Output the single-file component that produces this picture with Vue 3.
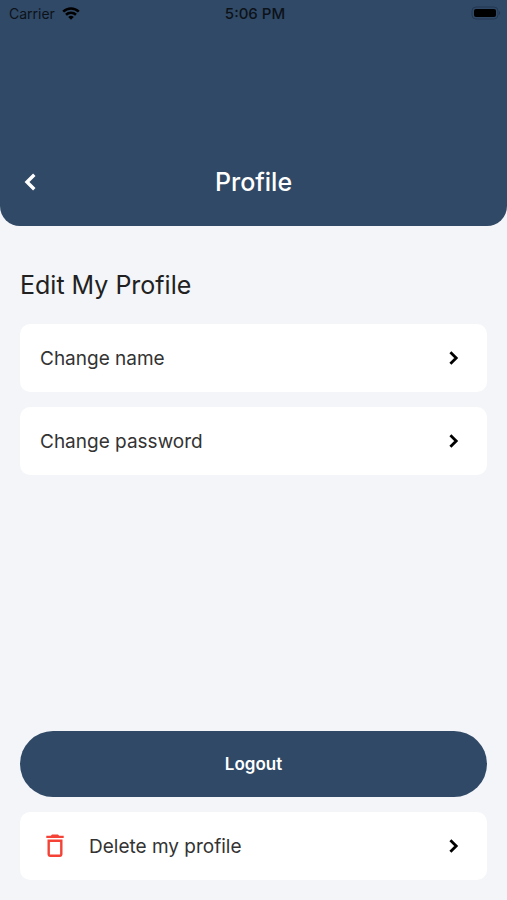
<script setup>
  import { ref } from 'vue'

  const time = ref('5:06 PM')

  const profileOptions = [
    { id: 'name', label: 'Change name' },
    { id: 'password', label: 'Change password' }
  ]
</script>

<template>
  <div class="profilePage">
    <header class="profileHeader">
      <div class="statusBar">
        <div class="statusCarrier">
          <span>Carrier</span>
          <svg class="wifiIcon" viewBox="0 0 18 13" aria-hidden="true">
            <path d="M1.2 4.6a11.2 11.2 0 0 1 15.6 0" />
            <path d="M4 7.8a7.2 7.2 0 0 1 10 0" />
            <path class="wifiDot" d="M9 12.8L6.2 10a4 4 0 0 1 5.6 0z" />
          </svg>
        </div>
        <span class="statusTime">{{ time }}</span>
        <svg class="batteryIcon" viewBox="0 0 30 14" aria-hidden="true">
          <rect class="batteryOutline" x="1" y="1" width="26" height="12" rx="4" />
          <rect x="3" y="3" width="22" height="8" rx="2" />
          <path class="batteryCap" d="M28 5a2.4 2.4 0 0 1 0 4z" />
        </svg>
      </div>
      <div class="titleBar">
        <button type="button" class="backButton" aria-label="Back">
          <svg viewBox="0 0 12 18" aria-hidden="true">
            <path d="M10.3 1.7L3 9l7.3 7.3" />
          </svg>
        </button>
        <h1 class="pageTitle">Profile</h1>
      </div>
    </header>

    <main class="profileContent">
      <h2 class="sectionTitle">Edit My Profile</h2>
      <button v-for="option in profileOptions" :key="option.id" type="button" class="optionCard">
        <span>{{ option.label }}</span>
        <svg class="chevronIcon" viewBox="0 0 10 14" aria-hidden="true">
          <path d="M1.4 1.2L7.2 7l-5.8 5.8" />
        </svg>
      </button>

      <div class="profileActions">
        <button type="button" class="logoutButton">Logout</button>
        <button type="button" class="optionCard">
          <svg class="trashIcon" viewBox="0 0 18 24" aria-hidden="true">
            <path d="M.3 1.7h4.5L6 .6h6l1.2 1.1h4.5v2.2H.3z" />
            <path fill-rule="evenodd" d="M1.5 5.6h15v14.9a2.4 2.4 0 0 1-2.4 2.4H3.9a2.4 2.4 0 0 1-2.4-2.4zM3.9 7.9v12.6h10.2V7.9z" />
          </svg>
          <span>Delete my profile</span>
          <svg class="chevronIcon" viewBox="0 0 10 14" aria-hidden="true">
            <path d="M1.4 1.2L7.2 7l-5.8 5.8" />
          </svg>
        </button>
      </div>
    </main>
  </div>
</template>

<style>
  body {
    margin: 0;
    background-color: #f3f5f9;
  }
</style>

<style scoped>
  .profilePage {
    display: flex;
    flex-direction: column;
    min-height: 100vh;
    background-color: #f3f5f9;
    color: #212121;
    font-family: Inter, "Liberation Sans", sans-serif;
  }

  .profileHeader {
    padding-bottom: 20px;
    border-radius: 0 0 20px 20px;
    background-color: #304966;
  }

  .statusBar {
    display: grid;
    grid-template-columns: 1fr auto 1fr;
    align-items: center;
    height: 26px;
    padding: 0 6px 0 9px;
    color: #0c1219;
    font-size: 14px;
  }

  .statusCarrier {
    display: flex;
    align-items: center;
    gap: 7px;
  }

  .statusTime {
    font-size: 15px;
    font-weight: 500;
  }

  .wifiIcon {
    width: 18px;
    height: 13px;
    fill: none;
    stroke: #000;
    stroke-width: 2.6;
  }

  .wifiDot {
    fill: #000;
    stroke: none;
  }

  .batteryIcon {
    width: 30px;
    height: 14px;
    justify-self: end;
  }

  .batteryOutline {
    fill: none;
    stroke: #233750;
  }

  .batteryCap {
    fill: #233750;
  }

  .titleBar {
    display: grid;
    grid-template-columns: 48px 1fr 48px;
    align-items: center;
    height: 48px;
    margin-top: 132px;
    padding: 0 6px;
  }

  .backButton {
    display: flex;
    align-items: center;
    justify-content: center;
    height: 48px;
    padding: 0;
    border: none;
    background: none;
    cursor: pointer;
  }

  .backButton svg {
    width: 12px;
    height: 18px;
    fill: none;
    stroke: #fff;
    stroke-width: 3.4;
  }

  .pageTitle {
    margin: 0;
    color: #fff;
    font-size: 25px;
    font-weight: 500;
    text-align: center;
  }

  .profileContent {
    display: flex;
    flex: 1;
    flex-direction: column;
    gap: 15px;
    padding: 43px 20px 20px;
  }

  .sectionTitle {
    margin: 0 0 8px;
    font-size: 25px;
    font-weight: 400;
    line-height: 32px;
  }

  .optionCard {
    display: flex;
    align-items: center;
    width: 100%;
    height: 68px;
    padding: 0 28px 0 20px;
    border: none;
    border-radius: 10px;
    background-color: #fff;
    color: #333;
    font-family: inherit;
    font-size: 19px;
    text-align: left;
    cursor: pointer;
  }

  .chevronIcon {
    width: 10px;
    height: 14px;
    margin-left: auto;
    fill: none;
    stroke: #000;
    stroke-width: 2.8;
  }

  .trashIcon {
    width: 18px;
    height: 24px;
    margin: 0 25px 0 6px;
    fill: #f44336;
  }

  .profileActions {
    display: flex;
    flex-direction: column;
    gap: 15px;
    margin-top: auto;
  }

  .logoutButton {
    height: 66px;
    border: none;
    border-radius: 33px;
    background-color: #304966;
    color: #fff;
    font-family: inherit;
    font-size: 17px;
    font-weight: 600;
    cursor: pointer;
  }
</style>
